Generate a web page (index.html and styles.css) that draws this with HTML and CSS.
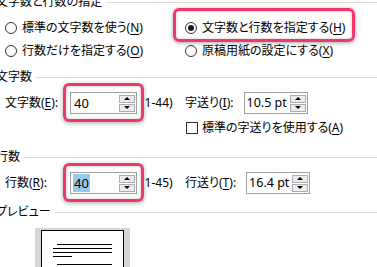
FILE: index.html
```html
<!DOCTYPE html>
<html lang="ja">
<head>
<meta charset="utf-8">
<link rel="stylesheet" href="styles.css">
</head>
<body>
<div class="dlg">
  <div class="ghead"><span>文字数と行数の指定</span><i class="rule"></i></div>
  <div class="radios">
    <label class="opt"><span class="radio"></span><span>標準の文字数を使う(<u>N</u>)</span></label>
    <label class="opt"><span class="radio on"></span><span>文字数と行数を指定する(<u>H</u>)</span><span class="hl hl-opt"></span></label>
    <label class="opt"><span class="radio"></span><span>行数だけを指定する(<u>O</u>)</span></label>
    <label class="opt"><span class="radio"></span><span>原稿用紙の設定にする(<u>X</u>)</span></label>
  </div>

  <div class="ghead sec2"><span>文字数</span><i class="rule"></i></div>
  <div class="srow first">
    <div class="lcell">
      <span class="lbl">文字数(<u>E</u>):</span>
      <div class="spin"><span class="val">40</span><span class="btns"><i class="b up"></i><i class="b dn"></i></span><span class="hl hl-spin"></span></div>
      <span class="range">(1-44)</span>
    </div>
    <div class="rcell">
      <span class="lbl2">字送り(<u>I</u>):</span>
      <div class="spin pt"><span class="val">10.5 pt</span><span class="btns"><i class="b up"></i><i class="b dn"></i></span></div>
    </div>
  </div>
  <div class="srow check">
    <div class="lcell"></div>
    <div class="rcell"><span class="cbox"></span><span>標準の字送りを使用する(<u>A</u>)</span></div>
  </div>

  <div class="ghead sec3"><span>行数</span><i class="rule"></i></div>
  <div class="srow first">
    <div class="lcell">
      <span class="lbl">行数(<u>R</u>):</span>
      <div class="spin"><span class="val"><span class="sel">40</span></span><span class="btns"><i class="b up"></i><i class="b dn"></i></span><span class="hl hl-spin"></span></div>
      <span class="range">(1-45)</span>
    </div>
    <div class="rcell">
      <span class="lbl2">行送り(<u>T</u>):</span>
      <div class="spin pt"><span class="val">16.4 pt</span><span class="btns"><i class="b up"></i><i class="b dn"></i></span></div>
    </div>
  </div>

  <div class="ghead sec4"><span>プレビュー</span><i class="rule"></i></div>
  <div class="preview">
    <div class="page">
      <i class="ln ind"></i>
      <i class="ln"></i>
      <i class="ln"></i>
      <i class="ln short"></i>
      <i class="ln ind gap"></i>
    </div>
  </div>
</div>
</body>
</html>
```

FILE: styles.css
```css
html, body {
  margin: 0;
  padding: 0;
}
body {
  width: 377px;
  height: 267px;
  overflow: hidden;
  background: #fff;
  color: #000;
  font-family: "Noto Sans", "Noto Sans CJK JP", sans-serif;
  font-size: 12px;
  line-height: 14px;
  font-feature-settings: "palt";
}
u {
  text-decoration: underline;
  text-underline-offset: 2px;
}
.dlg {
  margin-top: -5px;
}
.ghead {
  display: flex;
  align-items: center;
  gap: 4px;
  height: 14px;
  margin-left: -4px;
  white-space: nowrap;
}
.ghead .rule {
  flex: 1;
  height: 1px;
  background: #dcdcdc;
}
.sec2 { margin-top: 8px; }
.sec3 { margin-top: 14px; }
.sec4 { margin-top: 11px; }

.radios {
  display: grid;
  grid-template-columns: 180px 1fr;
  grid-auto-rows: 23px;
  padding: 7px 0 0 5px;
}
.opt {
  position: relative;
  display: flex;
  align-items: center;
  gap: 5px;
  white-space: nowrap;
}
.radio {
  width: 12px;
  height: 12px;
  box-sizing: border-box;
  border: 1px solid #333;
  border-radius: 50%;
  background: #fff;
  position: relative;
  flex: none;
}
.radio.on::after {
  content: "";
  position: absolute;
  left: 2px;
  top: 2px;
  width: 6px;
  height: 6px;
  border-radius: 50%;
  background: #1a1a1a;
}

.hl {
  position: absolute;
  box-sizing: border-box;
  border: 3px solid #f0386b;
  border-radius: 6px;
  box-shadow: 0 1px 4px rgba(0, 0, 0, 0.35), inset 0 0 3px rgba(0, 0, 0, 0.25);
  pointer-events: none;
}
.hl-opt {
  left: -12px;
  top: -8px;
  width: 182px;
  height: 34px;
}
.hl-spin {
  left: -8px;
  right: -8px;
  top: -10px;
  bottom: -9px;
}

.srow {
  display: grid;
  grid-template-columns: 180px 1fr;
  padding-left: 5px;
  height: 22px;
  margin-top: 8px;
}
.srow.check {
  height: 16px;
  margin-top: 6px;
}
.lcell, .rcell {
  display: flex;
  align-items: center;
  white-space: nowrap;
}
.lbl {
  width: 65px;
  flex: none;
}
.lbl2 {
  margin-right: 10px;
}
.spin {
  position: relative;
  width: 67px;
  height: 22px;
  box-sizing: border-box;
  border: 1px solid #a0a0a0;
  background: #fff;
  display: flex;
  align-items: center;
  flex: none;
}
.spin.pt {
  width: 64px;
}
.val {
  flex: 1;
  padding-left: 3px;
  font-family: "Noto Sans", sans-serif;
  font-size: 13px;
  line-height: 18px;
  display: flex;
  align-items: center;
  white-space: nowrap;
  overflow: hidden;
}
.spin.pt .val {
  padding-left: 2px;
  font-size: 12.5px;
}
.sel {
  background: #99c9ef;
  padding: 0 1px;
  margin-left: -1px;
}
.btns {
  display: flex;
  flex-direction: column;
  gap: 1px;
  width: 16px;
  margin-right: 1px;
  flex: none;
}
.b {
  height: 8px;
  box-sizing: border-box;
  border: 1px solid #adadad;
  background: #ececec;
  display: flex;
  align-items: center;
  justify-content: center;
}
.b::after {
  content: "";
  width: 0;
  height: 0;
  border-left: 3px solid transparent;
  border-right: 3px solid transparent;
}
.b.up::after {
  border-bottom: 3px solid #000;
}
.b.dn::after {
  border-top: 3px solid #000;
}
.range {
  margin-left: 4px;
}
.cbox {
  width: 12px;
  height: 12px;
  box-sizing: border-box;
  border: 1px solid #333;
  background: #fff;
  margin: 0 4px 0 1px;
  flex: none;
}

.preview {
  margin: 9px 0 0 35px;
  width: 95px;
  height: 39px;
  box-sizing: border-box;
  background: #d6d6d6;
  padding: 2px 6px 0 6px;
}
.page {
  height: 100%;
  box-sizing: border-box;
  background: #fff;
  border: 1px solid #000;
  border-bottom: 0;
  padding: 13px 11px 0 11px;
  display: flex;
  flex-direction: column;
  gap: 3px;
}
.ln {
  display: block;
  height: 1px;
  background: #000;
}
.ln.ind {
  margin-left: 4px;
}
.ln.short {
  width: 19px;
}
.ln.gap {
  margin-top: 4px;
}
```
